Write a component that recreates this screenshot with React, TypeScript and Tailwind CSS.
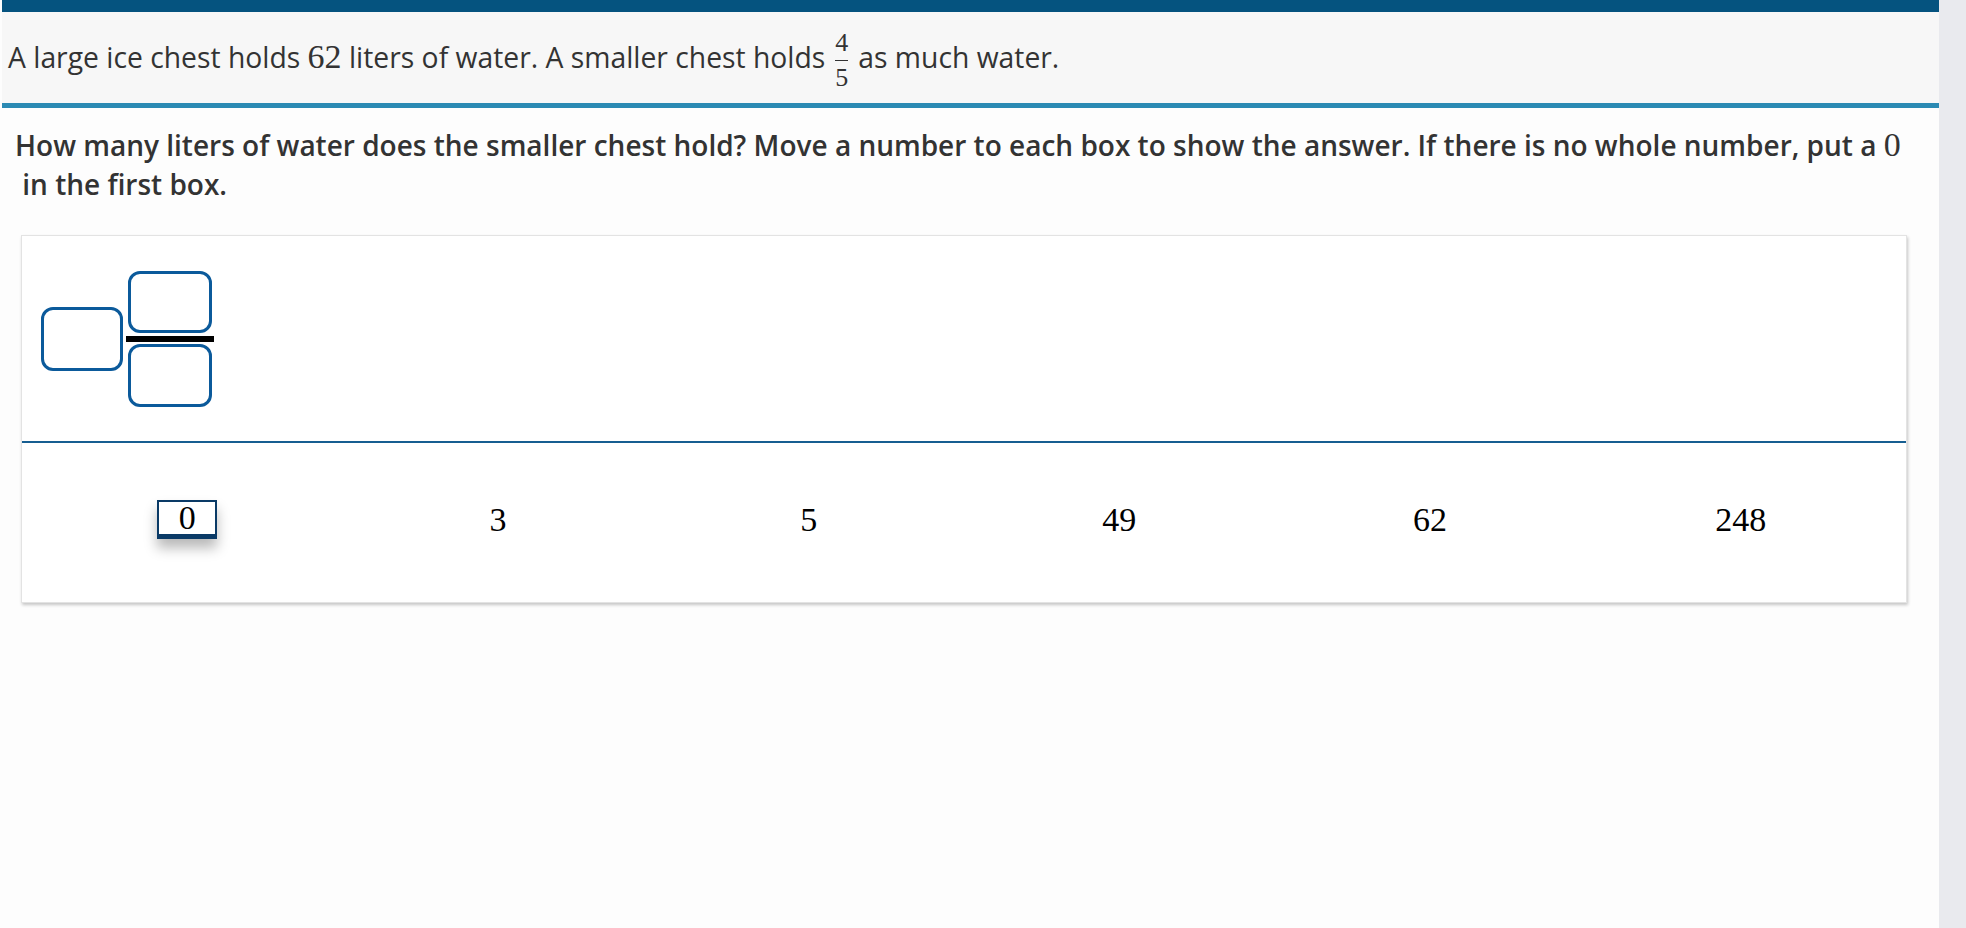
import React from 'react';

const serif = "font-['Liberation_Serif','Times_New_Roman',serif]";

const choices = ['0', '3', '5', '49', '62', '248'];

const AnswerBox = ({ className = '' }: { className?: string }) => (
  <div className={`rounded-[12px] border-[3px] border-[#0b5a9b] bg-white ${className}`} />
);

const Fraction = () => (
  <span className={`mx-[10px] inline-flex flex-col items-center align-middle text-[26px] leading-[24px] ${serif}`}>
    <span>4</span>
    <span className="my-[5px] h-[1px] w-[13px] bg-[#333]" />
    <span>5</span>
  </span>
);

const Tile = ({ value, picked }: { value: string; picked?: boolean }) => (
  <div className="flex justify-center">
    <div
      className={`flex h-[39px] w-[60px] items-center justify-center text-[34px] leading-none text-black ${serif} ${
        picked
          ? 'border-2 border-b-[5px] border-[#0a3a66] bg-white shadow-[0_9px_12px_rgba(0,0,0,0.28)]'
          : ''
      }`}
    >
      {value}
    </div>
  </div>
);

export default function App() {
  return (
    <div className="flex min-h-screen bg-[#fdfdfd] font-['Open_Sans',sans-serif] text-[#333]">
      <main className="flex-1 pl-[2px]">
        <div className="h-[12px] bg-[#05537f]" />
        <header className="flex h-[96px] items-center border-b-[5px] border-[#2b8ab3] bg-[#f7f7f7] pt-[5px] pl-[6px] text-[28.3px]">
          <p className="whitespace-nowrap">
            A large ice chest holds <span className={`text-[34px] ${serif}`}>62</span> liters of water. A smaller
            chest holds
            <Fraction />
            as much water.
          </p>
        </header>

        <section className="px-[13px] pt-[17px] text-[28px] font-semibold leading-[39px] text-[#333]">
          <p className="whitespace-nowrap">
            How many liters of water does the smaller chest hold? Move a number to each box to show the answer. If
            there is no whole number, put a <span className={`text-[34px] font-normal ${serif}`}>0</span>
          </p>
          <p className="whitespace-pre"> in the first box.</p>
        </section>

        <div className="mt-[31px] ml-[19px] mr-[32px] border border-[#e3e3e3] bg-white shadow-[1px_2px_3px_rgba(0,0,0,0.22)]">
          <div className="flex items-center px-[19px] pt-[35px] pb-[34px]">
            <AnswerBox className="h-[64px] w-[82px]" />
            <div className="ml-[3px] flex flex-col items-center">
              <AnswerBox className="h-[62px] w-[84px]" />
              <div className="mt-[3px] mb-[2px] h-[6px] w-[88px] bg-black" />
              <AnswerBox className="h-[63px] w-[84px]" />
            </div>
          </div>
          <div className="h-[2px] bg-[#165e91]" />
          <div className="grid grid-cols-6 px-[10px] pt-[57px] pb-[63px]">
            {choices.map((c, i) => (
              <Tile key={c} value={c} picked={i === 0} />
            ))}
          </div>
        </div>
      </main>
      <div className="w-[27px] shrink-0 bg-[#e9eaee]" />
    </div>
  );
}
